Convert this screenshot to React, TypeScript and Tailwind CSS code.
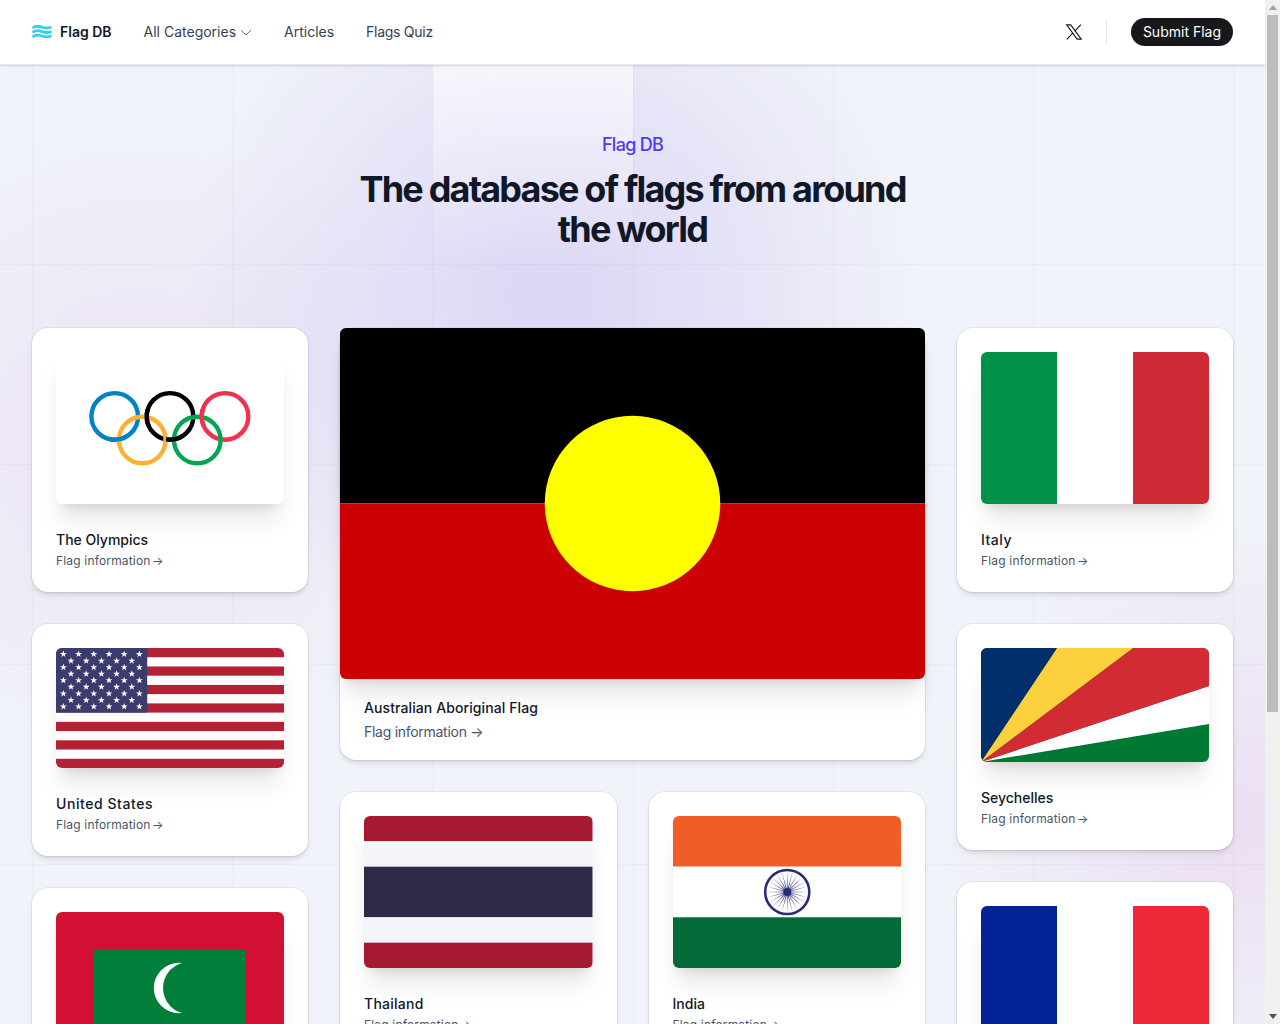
import React from "react";

const Italy = () => (<svg viewBox="0 0 3 2" preserveAspectRatio="none" className="block w-full h-full"><rect width="1" height="2" fill="#009246"/><rect x="1" width="1" height="2" fill="#fff"/><rect x="2" width="1" height="2" fill="#ce2b37"/></svg>);
const France = () => (<svg viewBox="0 0 3 2" preserveAspectRatio="none" className="block w-full h-full"><rect width="1" height="2" fill="#002395"/><rect x="1" width="1" height="2" fill="#fff"/><rect x="2" width="1" height="2" fill="#ed2939"/></svg>);
const Thailand = () => (
  <svg viewBox="0 0 6 6" preserveAspectRatio="none" className="block w-full h-full">
    <rect width="6" height="1" fill="#a51931"/><rect y="1" width="6" height="1" fill="#f4f5f8"/><rect y="2" width="6" height="2" fill="#2d2a4a"/><rect y="4" width="6" height="1" fill="#f4f5f8"/><rect y="5" width="6" height="1" fill="#a51931"/>
  </svg>
);
const India = () => {
  const spokes = Array.from({ length: 24 }, (_, i) => i * 15);
  return (
    <svg viewBox="0 0 228 152" preserveAspectRatio="none" className="block w-full h-full">
      <rect width="228" height="51" fill="#f15d26"/><rect y="50.5" width="228" height="51" fill="#fff"/><rect y="101.3" width="228" height="51" fill="#046a38"/>
      <circle cx="114" cy="76" r="22" fill="none" stroke="#2b2a77" strokeWidth="2.6"/>
      <circle cx="114" cy="76" r="4" fill="#2b2a77"/>
      {spokes.map((a) => (<polygon key={a} points="113.4,76 114,55 114.6,76 114,80" fill="#2b2a77" opacity="0.8" transform={`rotate(${a} 114 76)`}/>))}
    </svg>
  );
};
const Seychelles = () => (
  <svg viewBox="0 0 228 114" preserveAspectRatio="none" className="block w-full h-full">
    <rect width="228" height="114" fill="#007a33"/>
    <polygon points="0,114 228,76 228,38" fill="#fff"/>
    <polygon points="0,114 228,38 228,0 152,0" fill="#d22b33"/>
    <polygon points="0,114 152,0 76,0" fill="#fcd03c"/>
    <polygon points="0,114 76,0 0,0" fill="#002f6c"/>
  </svg>
);
const Aboriginal = () => (
  <svg viewBox="0 0 585 351" preserveAspectRatio="none" className="block w-full h-full">
    <rect width="585" height="175.5" fill="#000"/><rect y="175.5" width="585" height="175.5" fill="#cc0000"/>
    <circle cx="292.5" cy="175.5" r="87.75" fill="#ffff00"/>
  </svg>
);
const Maldives = () => (
  <svg viewBox="0 0 228 152" preserveAspectRatio="none" className="block w-full h-full">
    <rect width="228" height="152" fill="#d21034"/><rect x="38" y="38" width="152" height="76" fill="#007e3a"/>
    <circle cx="123" cy="76" r="25.2" fill="#fff"/><circle cx="133" cy="76" r="26" fill="#007e3a"/>
  </svg>
);
const usStripes = Array.from({ length: 7 }, (_, i) => i);
const usStars = Array.from({ length: 9 }, (_, r) => Array.from({ length: r % 2 ? 5 : 6 }, (_, c) => ({ x: (r % 2 ? 15 : 7.4) + c * 15.2, y: 6.2 + r * 6.55 }))).flat();
const starPts = "0,-3.2 0.75,-1 3.05,-1 1.2,0.38 1.88,2.6 0,1.25 -1.88,2.6 -1.2,0.38 -3.05,-1 -0.75,-1";
const USA = () => (
  <svg viewBox="0 0 228 120" preserveAspectRatio="none" className="block w-full h-full">
    <rect width="228" height="120" fill="#fff"/>
    {usStripes.map((i) => (<rect key={i} y={i * 18.46} width="228" height="9.23" fill="#b22234"/>))}
    <rect width="91.2" height="64.6" fill="#3c3b6e"/>
    {usStars.map((s, i) => (<polygon key={i} points={starPts} fill="#fff" transform={`translate(${s.x} ${s.y}) scale(1.12)`}/>))}
  </svg>
);
const ring = (cx: number, cy: number, color: string, clip?: string) => (<circle cx={cx} cy={cy} r="23.3" fill="none" stroke={color} strokeWidth="4.4" clipPath={clip}/>);
const Olympics = () => (
  <svg viewBox="0 0 228 152" className="block w-full h-full bg-white">
    <defs>
      <clipPath id="c1"><rect x="55" y="78" width="16" height="17"/></clipPath>
      <clipPath id="c2"><rect x="83" y="57" width="16" height="17"/></clipPath>
      <clipPath id="c3"><rect x="110" y="78" width="16" height="17"/></clipPath>
      <clipPath id="c4"><rect x="138" y="57" width="16" height="17"/></clipPath>
    </defs>
    {ring(58.7, 64.4, "#0081c8")}{ring(114, 64.4, "#000")}{ring(169, 64.4, "#ee334e")}
    {ring(86.3, 88, "#fcb131")}{ring(141.3, 88, "#00a651")}
    {ring(58.7, 64.4, "#0081c8", "url(#c1)")}{ring(114, 64.4, "#000", "url(#c2)")}{ring(114, 64.4, "#000", "url(#c3)")}{ring(169, 64.4, "#ee334e", "url(#c4)")}
  </svg>
);

const flagClass = "overflow-hidden rounded-md shadow-[0_20px_25px_-5px_rgba(0,0,0,0.1),0_8px_10px_-6px_rgba(0,0,0,0.1)]";

function Card({ name, h, t = "tracking-normal", children }: { name: string; h: string; t?: string; children: React.ReactNode }) {
  return (
    <div className="rounded-2xl bg-white px-6 pt-6 pb-[23px] shadow-md ring-1 ring-gray-900/5">
      <div className={`${flagClass} ${h}`}>{children}</div>
      <h3 className={`mt-[26px] text-sm leading-5 font-medium text-gray-900 ${t}`}>{name}</h3>
      <p className="mt-[3px] text-xs leading-4 tracking-[0.014em] text-gray-600">Flag information <span className="-ml-0.5">→</span></p>
    </div>
  );
}

export default function App() {
  return (
    <div className="relative min-h-[1459px] overflow-hidden bg-[#f0f3f9] pr-[15px] font-['Inter',sans-serif]">
      <div className="absolute inset-0 bg-[radial-gradient(circle_at_550px_295px,rgba(190,172,240,0.42),rgba(190,172,240,0.2)_210px,rgba(190,172,240,0)_370px),radial-gradient(circle_at_140px_440px,rgba(232,200,235,0.42),rgba(232,200,235,0)_320px),radial-gradient(circle_at_1230px_820px,rgba(232,200,235,0.5),rgba(232,200,235,0)_300px)]" />
      <div className="absolute inset-0 bg-[linear-gradient(to_right,rgba(17,24,39,0.035)_1px,transparent_1px),linear-gradient(to_bottom,rgba(17,24,39,0.035)_1px,transparent_1px)] bg-[size:200.2px_200px] bg-[position:32.5px_64px]" />
      <div className="absolute left-[433px] top-16 h-[200px] w-[200px] bg-gradient-to-b from-white/60 to-white/0" />

      <header className="relative flex h-[65px] items-center justify-between border-b border-gray-200 bg-white px-8 shadow-sm">
        <div className="flex items-center">
          <div className="flex items-center gap-2">
            <svg width="20" height="14" viewBox="0 0 20 14" fill="none" stroke="#2dd4ef" strokeWidth="2.8">
              <path d="M0.5 3 C4 0.4 7 1 10 2.2 C13 3.4 16 3.6 19.5 2" />
              <path d="M0.5 7.4 C4 4.8 7 5.4 10 6.6 C13 7.8 16 8 19.5 6.4" />
              <path d="M0.5 11.8 C4 9.2 7 9.8 10 11 C13 12.2 16 12.4 19.5 10.8" />
            </svg>
            <span className="text-sm font-semibold text-gray-900">Flag DB</span>
          </div>
          <nav className="ml-8 flex items-center gap-8 text-sm text-gray-700">
            <span className="flex items-center gap-1">All Categories
              <svg width="12" height="7" viewBox="0 0 12 7" fill="none" stroke="#6b7280" strokeWidth="1"><path d="M1 1 L6 6 L11 1" /></svg>
            </span>
            <span>Articles</span>
            <span className="tracking-[-0.02em]">Flags Quiz</span>
          </nav>
        </div>
        <div className="flex items-center">
          <svg viewBox="0 0 24 24" fill="none" stroke="#111827" strokeWidth="1.5" className="h-[18px] w-[18px]">
            <polygon points="3.5,2.5 9,2.5 23,21.5 17.5,21.5" />
            <path d="M22.5 2.2 L14.6 10.6 M11.6 13.6 L3.8 21.8" />
          </svg>
          <div className="mx-6 h-6 w-px bg-gray-200" />
          <button className="h-7 rounded-full bg-[#18181b] px-3 text-sm text-white">Submit Flag</button>
        </div>
      </header>

      <main className="relative px-8">
        <section className="pt-[66px] text-center">
          <p className="text-lg leading-7 font-medium tracking-[-0.04em] text-indigo-600">Flag DB</p>
          <h1 className="mx-auto mt-[10px] max-w-xl text-4xl leading-10 font-bold tracking-[-0.05em] text-gray-900">The database of flags from around the world</h1>
        </section>

        <div className="mt-[79px] flex items-start gap-8">
          <div className="flex w-[276px] flex-col gap-8">
            <Card name="The Olympics" h="h-[152px]"><Olympics /></Card>
            <Card name="United States" h="h-[120px]" t="tracking-[0.04em]"><USA /></Card>
            <Card name="Maldives" h="h-[152px]"><Maldives /></Card>
          </div>

          <div className="flex min-w-0 flex-1 flex-col gap-8">
            <div className="rounded-2xl bg-white shadow-md ring-1 ring-gray-900/5">
              <div className={`${flagClass} h-[351px]`}><Aboriginal /></div>
              <div className="px-6 pt-[19px] pb-[18px]">
                <h3 className="text-sm leading-5 font-medium tracking-[0.007em] text-gray-900">Australian Aboriginal Flag</h3>
                <p className="mt-1 text-sm leading-5 tracking-[-0.02em] text-gray-600">Flag information →</p>
              </div>
            </div>
            <div className="grid grid-cols-2 gap-8">
              <Card name="Thailand" h="h-[152px]" t="tracking-[0.018em]"><Thailand /></Card>
              <Card name="India" h="h-[152px]"><India /></Card>
            </div>
          </div>

          <div className="flex w-[276px] flex-col gap-8">
            <Card name="Italy" h="h-[152px]" t="tracking-[0.035em]"><Italy /></Card>
            <Card name="Seychelles" h="h-[114px]"><Seychelles /></Card>
            <Card name="France" h="h-[152px]"><France /></Card>
          </div>
        </div>
      </main>

      <div className="fixed right-0 top-0 flex h-screen w-[15px] flex-col items-center bg-[#f0f0f0]">
        <div className="flex h-[15px] w-full items-center justify-center"><div className="h-0 w-0 border-x-[4px] border-b-[5px] border-x-transparent border-b-[#a3a3a3]" /></div>
        <div className="h-[697px] w-[11px] bg-[#bcbcbc]" />
        <div className="flex-1" />
        <div className="flex h-[15px] w-full items-center justify-center"><div className="h-0 w-0 border-x-[4px] border-t-[5px] border-x-transparent border-t-[#505050]" /></div>
      </div>
    </div>
  );
}
